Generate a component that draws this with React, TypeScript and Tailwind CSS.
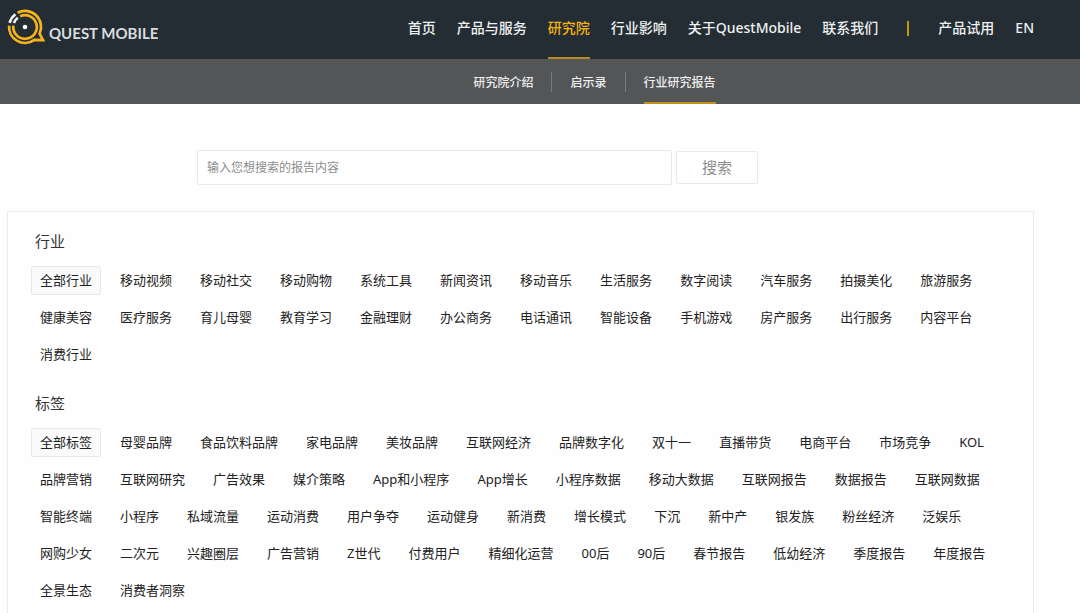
import { useState } from "react"

const navItems = ["首页", "产品与服务", "研究院", "行业影响", "关于QuestMobile", "联系我们"]

const subNavItems = ["研究院介绍", "启示录", "行业研究报告"]

const industries = [
  "全部行业", "移动视频", "移动社交", "移动购物", "系统工具", "新闻资讯", "移动音乐", "生活服务", "数字阅读",
  "汽车服务", "拍摄美化", "旅游服务", "健康美容", "医疗服务", "育儿母婴", "教育学习", "金融理财", "办公商务",
  "电话通讯", "智能设备", "手机游戏", "房产服务", "出行服务", "内容平台", "消费行业",
]

const tags = [
  "全部标签", "母婴品牌", "食品饮料品牌", "家电品牌", "美妆品牌", "互联网经济", "品牌数字化", "双十一", "直播带货",
  "电商平台", "市场竞争", "KOL", "品牌营销", "互联网研究", "广告效果", "媒介策略", "App和小程序", "App增长",
  "小程序数据", "移动大数据", "互联网报告", "数据报告", "互联网数据", "智能终端", "小程序", "私域流量", "运动消费",
  "用户争夺", "运动健身", "新消费", "增长模式", "下沉", "新中产", "银发族", "粉丝经济", "泛娱乐", "网购少女",
  "二次元", "兴趣圈层", "广告营销", "Z世代", "付费用户", "精细化运营", "00后", "90后", "春节报告", "低幼经济",
  "季度报告", "年度报告", "全景生态", "消费者洞察",
]

function Logo() {
  return (
    <a href="#" className="flex items-center gap-[3px]">
      <svg viewBox="0 0 40 38" className="h-[38px] w-10" fill="none" aria-hidden="true">
        <g stroke="#f5b41c" strokeWidth="2.7">
          <path d="M11.6 4.8A16 16 0 0 1 33.6 25.6L37 32L28.4 31.9A16 16 0 0 1 3.1 17.6" />
          <path d="M14.2 8.2A11.8 11.8 0 1 1 7.3 17.6" />
        </g>
        <g stroke="#f2f4f5" strokeWidth="2.6">
          <path d="M3.6 14.8A16 16 0 0 1 9.4 6.2" />
          <path d="M7.9 15A11.8 11.8 0 0 1 11.8 9.7" />
        </g>
        <circle cx="19" cy="19" r="2.3" fill="#ffffff" />
      </svg>
      <span className="pt-3 font-['Lato'] text-[15px] leading-5 font-bold text-[#d9dcde]">QUEST MOBILE</span>
    </a>
  )
}

interface FilterGroupProps {
  title: string
  items: string[]
}

function FilterGroup({ title, items }: FilterGroupProps) {
  const [selected, setSelected] = useState(items[0])

  return (
    <section>
      <h2 className="pl-1 text-[15px] leading-6 text-[#333]">{title}</h2>
      <div className="mt-[13px] flex flex-wrap gap-x-[10px] gap-y-2">
        {items.map((item) => (
          <button
            key={item}
            type="button"
            onClick={() => setSelected(item)}
            className={
              item === selected
                ? "h-[29px] rounded-xs border border-[#e8e8e8] bg-[#fafafa] px-2 text-[13px] text-[#222]"
                : "h-[29px] rounded-xs border border-transparent px-2 text-[13px] text-[#222]"
            }
          >
            {item}
          </button>
        ))}
      </div>
    </section>
  )
}

export default function App() {
  return (
    <div className="min-h-screen bg-[#fefefe] font-['Noto_Sans','Noto_Sans_CJK_SC',sans-serif]">
      <header className="flex h-[59px] items-start justify-between bg-[#232d33] pr-[46px] pl-[6px]">
        <div className="pt-2">
          <Logo />
        </div>
        <nav className="flex h-full items-center gap-[21px] text-sm font-medium text-[#eef0f1]">
          {navItems.map((item) => (
            <a
              key={item}
              href="#"
              className={
                item === "研究院"
                  ? "flex h-full items-center border-b-2 border-[#b58a20] pb-[2px] text-[#f0b310]"
                  : "flex h-full items-center pb-1"
              }
            >
              {item}
            </a>
          ))}
          <span className="mx-2 mb-[2px] h-[15px] w-[2px] bg-[#c4960f]" />
          <a href="#" className="flex h-full items-center pb-1">产品试用</a>
          <a href="#" className="flex h-full items-center pb-1">EN</a>
        </nav>
      </header>

      <nav className="flex h-[45px] items-center justify-center bg-[#545556] pl-[109px] text-xs font-medium text-[#eeeeee]">
        {subNavItems.map((item, index) => (
          <div key={item} className="flex h-full items-center">
            {index > 0 && <span className="mx-[18px] h-5 w-px bg-[#7a7b7c]" />}
            <a
              href="#"
              className={
                item === "行业研究报告"
                  ? "flex h-full items-center border-b-2 border-[#c08f1c] pt-[5px]"
                  : "flex h-full items-center pt-[3px]"
              }
            >
              {item}
            </a>
          </div>
        ))}
      </nav>

      <main className="pr-[46px] pl-[7px]">
        <form className="mt-[46px] ml-[190px] flex items-center gap-1" onSubmit={(e) => e.preventDefault()}>
          <input
            type="text"
            aria-label="搜索报告"
            placeholder="输入您想搜索的报告内容"
            className="h-[35px] w-full max-w-[475px] rounded-xs border border-[#e9e9e9] bg-white px-[9px] text-xs text-[#333] outline-none placeholder:text-[#8c8c8c]"
          />
          <button
            type="submit"
            className="h-[33px] w-[82px] rounded-xs border border-[#e9e9e9] bg-white text-[15px] text-[#8c8c8c]"
          >
            搜索
          </button>
        </form>

        <div className="mt-[26px] flex flex-col gap-[22px] border border-[#ebebeb] pt-[17px] pr-[27px] pb-10 pl-[23px]">
          <FilterGroup title="行业" items={industries} />
          <FilterGroup title="标签" items={tags} />
        </div>
      </main>
    </div>
  )
}
